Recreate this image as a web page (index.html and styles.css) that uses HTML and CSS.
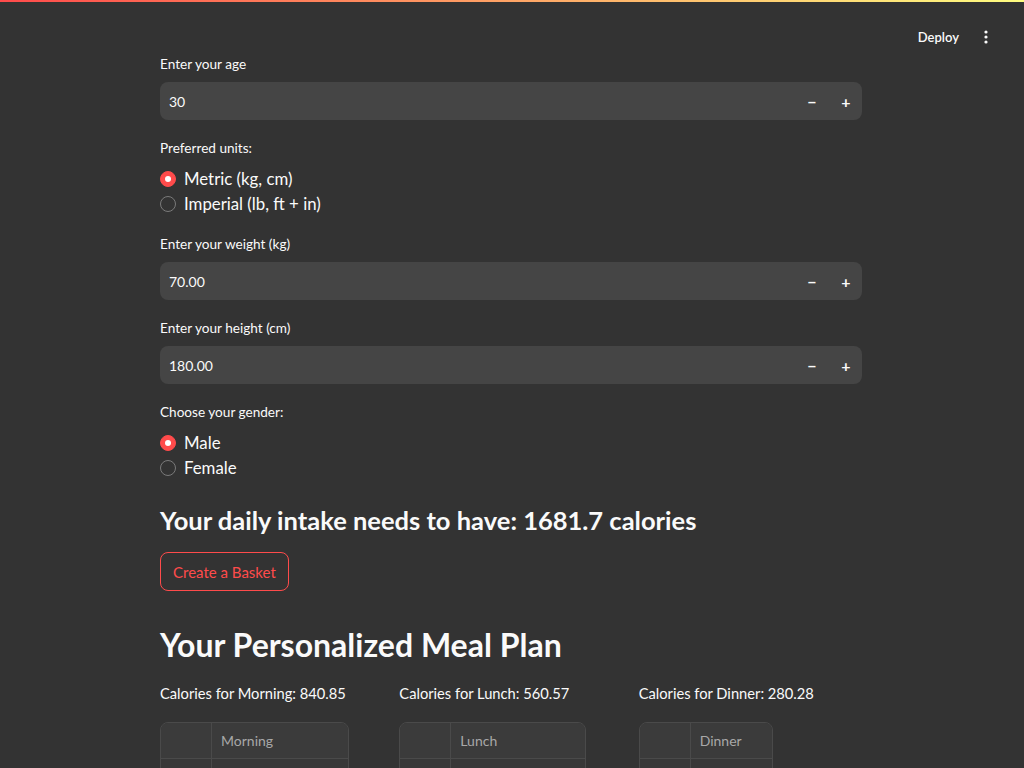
FILE: index.html
```html
<!DOCTYPE html>
<html>
<head>
<meta charset="utf-8">
<link rel="stylesheet" href="styles.css">
</head>
<body>
<div class="topbar"></div>
<header class="header">
  <span class="deploy">Deploy</span>
  <span class="kebab"><svg width="4" height="14" viewBox="0 0 4 14"><circle cx="2" cy="2" r="1.6" fill="#fafafa"/><circle cx="2" cy="7" r="1.6" fill="#fafafa"/><circle cx="2" cy="12" r="1.6" fill="#fafafa"/></svg></span>
</header>
<main class="main">
  <div class="widget">
    <label class="label">Enter your age</label>
    <div class="numinput"><span class="val">30</span><span class="step">&minus;</span><span class="step">+</span></div>
  </div>
  <div class="widget">
    <label class="label">Preferred units:</label>
    <div class="radios">
      <div class="radio"><span class="dot on"></span>Metric (kg, cm)</div>
      <div class="radio"><span class="dot"></span>Imperial (lb, ft + in)</div>
    </div>
  </div>
  <div class="widget">
    <label class="label">Enter your weight (kg)</label>
    <div class="numinput"><span class="val">70.00</span><span class="step">&minus;</span><span class="step">+</span></div>
  </div>
  <div class="widget">
    <label class="label">Enter your height (cm)</label>
    <div class="numinput"><span class="val">180.00</span><span class="step">&minus;</span><span class="step">+</span></div>
  </div>
  <div class="widget">
    <label class="label">Choose your gender:</label>
    <div class="radios">
      <div class="radio"><span class="dot on"></span>Male</div>
      <div class="radio"><span class="dot"></span>Female</div>
    </div>
  </div>
  <h3 class="h3">Your daily intake needs to have: 1681.7 calories</h3>
  <div><button class="btn">Create a Basket</button></div>
  <h2 class="h2">Your Personalized Meal Plan</h2>
  <div class="cols">
    <div class="col">
      <p class="coltitle">Calories for Morning: 840.85</p>
      <div class="table t1"><div class="row"><div class="idx"></div><div class="cell">Morning</div></div><div class="row"><div class="idx"></div><div class="cell"></div></div></div>
    </div>
    <div class="col">
      <p class="coltitle">Calories for Lunch: 560.57</p>
      <div class="table t2"><div class="row"><div class="idx"></div><div class="cell">Lunch</div></div><div class="row"><div class="idx"></div><div class="cell"></div></div></div>
    </div>
    <div class="col">
      <p class="coltitle">Calories for Dinner: 280.28</p>
      <div class="table t3"><div class="row"><div class="idx"></div><div class="cell">Dinner</div></div><div class="row"><div class="idx"></div><div class="cell"></div></div></div>
    </div>
  </div>
</main>
</body>
</html>
```
FILE: styles.css
```css
html, body {
  margin: 0;
  padding: 0;
  background: #333333;
  color: #fafafa;
  font-family: "Lato", "Liberation Sans", sans-serif;
  overflow: hidden;
  height: 768px;
}
.topbar {
  height: 2px;
  background: linear-gradient(90deg, #ff4b4b, #fffd80);
}
.header {
  box-sizing: border-box;
  display: flex;
  justify-content: flex-end;
  align-items: center;
  height: 48px;
  padding: 22px 36px 0 0;
  gap: 25px;
}
.deploy {
  font-size: 13px;
  font-weight: 600;
  color: #fafafa;
}
.kebab {
  display: flex;
  align-items: center;
  height: 14px;
}
.kebab svg { display: block; }
.main {
  width: 702px;
  margin-left: 160px;
  padding-top: 2px;
}
.widget {
  margin-bottom: 16px;
}
.label {
  display: flex;
  align-items: center;
  height: 24px;
  font-size: 13.6px;
  margin-bottom: 6px;
  color: #fafafa;
}
.numinput {
  display: flex;
  align-items: center;
  height: 38px;
  background: #454545;
  border-radius: 8px;
}
.val {
  flex: 1;
  padding-left: 9px;
  font-size: 14px;
}
.step {
  width: 32px;
  text-align: center;
  font-size: 16px;
  font-weight: 700;
  padding-left: 2px;
}
.radios {
  display: flex;
  flex-direction: column;
}
.radio {
  display: flex;
  align-items: center;
  height: 25px;
  font-size: 16.8px;
}
.dot {
  box-sizing: border-box;
  width: 16px;
  height: 16px;
  border-radius: 50%;
  border: 1px solid #7a7a7a;
  margin-right: 8px;
  display: flex;
  align-items: center;
  justify-content: center;
}
.dot.on {
  background: #ff4b4b;
  border-color: #ff4b4b;
}
.dot.on::after {
  content: "";
  width: 6px;
  height: 6px;
  border-radius: 50%;
  background: #fff;
}
.h3 {
  font-size: 25.5px;
  font-weight: 700;
  margin: 23px 0 15px;
  line-height: 34px;
}
.btn {
  font-family: inherit;
  font-size: 15px;
  color: #ff4b4b;
  background: transparent;
  border: 1px solid #ff4b4b;
  border-radius: 8px;
  height: 39px;
  padding: 0 12px;
  display: block;
}
.h2 {
  font-size: 32px;
  font-weight: 700;
  line-height: 44px;
  margin: 32px 0 14px;
}
.cols {
  display: flex;
  gap: 16px;
}
.col {
  flex: 1;
}
.coltitle {
  font-size: 14.7px;
  margin: 0 0 17px;
  line-height: 24px;
}
.table {
  border: 1px solid #4a4a4a;
  border-radius: 8px;
  overflow: hidden;
  background: #383838;
}
.t1 { width: 187px; }
.t2 { width: 185px; }
.t3 { width: 132px; }
.row {
  display: flex;
  height: 35px;
  border-bottom: 1px solid #4a4a4a;
}
.row:first-child { background: #3b3b3b; }
.idx {
  width: 50px;
  border-right: 1px solid #4a4a4a;
}
.cell {
  flex: 1;
  padding-left: 9px;
  display: flex;
  align-items: center;
  font-size: 14px;
  color: #a8a8a8;
}
```
